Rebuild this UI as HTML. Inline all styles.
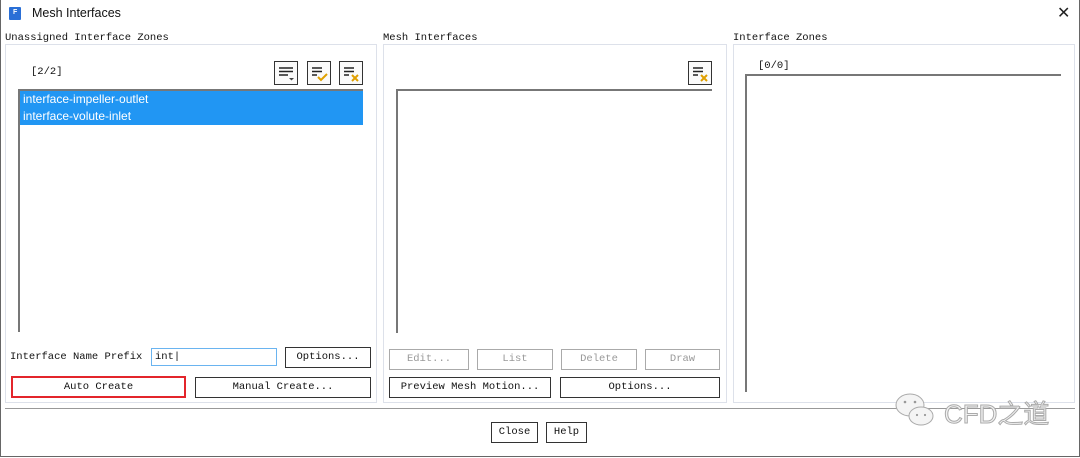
<!DOCTYPE html>
<html><head><meta charset="utf-8"><style>
*{margin:0;padding:0;box-sizing:border-box}
body{width:1080px;height:458px;background:#fff;position:relative;overflow:hidden;font-family:"Liberation Mono",monospace;font-size:10.5px;color:#111}
.a{position:absolute}
.win{left:0;top:0;width:1080px;height:457px;border:1px solid #666;border-top:none}
.title{left:32px;top:6px;font-family:"Liberation Sans","Noto Sans CJK SC",sans-serif;font-size:12.5px}
.panel{border:1px solid #dde1ea}
.btn{border:1px solid #333;background:#fff;text-align:center;line-height:19px}
.dis{border-color:#aaa;color:#999}
.list{border-top:2px solid #777;border-left:2px solid #777}
.ic{width:24px;height:24px;border:1px solid #333;background:#fafafa}
.row{font-family:"Liberation Sans",sans-serif;font-size:12px;color:#fff;height:17px;line-height:17px;padding-left:3px}
</style></head><body>
<div class="a win"></div>
<div class="a" style="left:9px;top:7px;width:12px;height:13px;background:#2a6fd6;border-radius:1px"></div>
<div class="a" style="left:13px;top:9px;color:#fff;font:bold 7px 'Liberation Sans'">F</div>
<div class="a title">Mesh Interfaces</div>
<div class="a" style="left:1057px;top:3px;font:16px 'Liberation Sans';color:#222">✕</div>

<div class="a" style="left:5px;top:32px">Unassigned Interface Zones</div>
<div class="a" style="left:383px;top:32px">Mesh Interfaces</div>
<div class="a" style="left:733px;top:32px">Interface Zones</div>

<div class="a panel" style="left:5px;top:44px;width:372px;height:359px"></div>
<div class="a panel" style="left:383px;top:44px;width:344px;height:359px"></div>
<div class="a panel" style="left:733px;top:44px;width:342px;height:359px"></div>

<div class="a" style="left:31px;top:66px">[2/2]</div>
<div class="a ic" style="left:274px;top:61px"><svg width="22" height="22"><path d="M4 6h14M4 9.5h14M4 13h9" stroke="#222" stroke-width="1.5"/><path d="M14 16l2.5 2.5 2.5-2.5z" fill="#444"/></svg></div>
<div class="a ic" style="left:307px;top:61px"><svg width="22" height="22"><path d="M4 6h10M4 9.5h10M4 13h5" stroke="#222" stroke-width="1.5"/><path d="M10 15l3 3 6-6" stroke="#e0a000" stroke-width="2" fill="none"/></svg></div>
<div class="a ic" style="left:339px;top:61px"><svg width="22" height="22"><path d="M4 6h10M4 9.5h10M4 13h5" stroke="#222" stroke-width="1.5"/><path d="M12 13l6 6M18 13l-6 6" stroke="#e0a000" stroke-width="2"/></svg></div>
<div class="a list" style="left:18px;top:89px;width:345px;height:243px">
<div style="background:#2196f3;margin-top:0"><div class="row">interface-impeller-outlet</div><div class="row">interface-volute-inlet</div></div></div>

<div class="a ic" style="left:688px;top:61px"><svg width="22" height="22"><path d="M4 6h10M4 9.5h10M4 13h5" stroke="#222" stroke-width="1.5"/><path d="M12 13l6 6M18 13l-6 6" stroke="#e0a000" stroke-width="2"/></svg></div>
<div class="a list" style="left:396px;top:89px;width:316px;height:244px"></div>

<div class="a" style="left:758px;top:60px">[0/0]</div>
<div class="a list" style="left:745px;top:74px;width:316px;height:318px"></div>

<div class="a" style="left:10px;top:351px">Interface Name Prefix</div>
<div class="a" style="left:151px;top:348px;width:126px;height:18px;border:1px solid #6ab4f0;padding-left:3px;line-height:16px">int|</div>
<div class="a btn" style="left:285px;top:347px;width:86px;height:21px">Options...</div>
<div class="a btn" style="left:11px;top:376px;width:175px;height:22px;border:2px solid #e3252b;line-height:18px">Auto Create</div>
<div class="a btn" style="left:195px;top:377px;width:176px;height:21px">Manual Create...</div>

<div class="a btn dis" style="left:389px;top:349px;width:80px;height:21px">Edit...</div>
<div class="a btn dis" style="left:477px;top:349px;width:76px;height:21px">List</div>
<div class="a btn dis" style="left:561px;top:349px;width:76px;height:21px">Delete</div>
<div class="a btn dis" style="left:645px;top:349px;width:75px;height:21px">Draw</div>
<div class="a btn" style="left:389px;top:377px;width:162px;height:21px">Preview Mesh Motion...</div>
<div class="a btn" style="left:560px;top:377px;width:160px;height:21px">Options...</div>

<div class="a" style="left:5px;top:408px;width:1070px;height:1px;background:#999"></div>
<div class="a btn" style="left:491px;top:422px;width:47px;height:21px">Close</div>
<div class="a btn" style="left:546px;top:422px;width:41px;height:21px">Help</div>

<svg class="a" style="left:893px;top:390px" width="48" height="40"><ellipse cx="17" cy="15" rx="14" ry="11" fill="#f4f4f4" stroke="#aaa"/><ellipse cx="28" cy="26" rx="12" ry="9" fill="#f4f4f4" stroke="#aaa"/><circle cx="12" cy="12" r="1.3" fill="#999"/><circle cx="22" cy="12" r="1.3" fill="#999"/><circle cx="24" cy="25" r="1.1" fill="#999"/><circle cx="32" cy="25" r="1.1" fill="#999"/></svg>
<div class="a" style="left:944px;top:394px;font:26px 'Liberation Sans','Noto Sans CJK SC',sans-serif;color:#f2f2f2;-webkit-text-stroke:1px #aaa">CFD之道</div>
</body></html>
